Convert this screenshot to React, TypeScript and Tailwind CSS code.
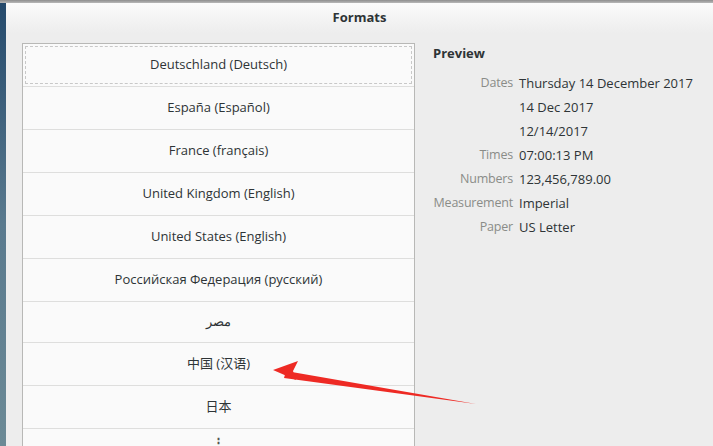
import React from 'react';

const locales = [
  'Deutschland (Deutsch)',
  'España (Español)',
  'France (français)',
  'United Kingdom (English)',
  'United States (English)',
  'Российская Федерация (русский)',
  'مصر',
  '中国 (汉语)',
  '日本',
];

const preview: [string, string][] = [
  ['Dates', 'Thursday 14 December 2017'],
  ['', '14 Dec 2017'],
  ['', '12/14/2017'],
  ['Times', '07:00:13 PM'],
  ['Numbers', '123,456,789.00'],
  ['Measurement', 'Imperial'],
  ['Paper', 'US Letter'],
];

const font = { fontFamily: '"Open Sans", "Noto Sans CJK SC", "Noto Sans", sans-serif' };

const App: React.FC = () => {
  return (
    <div
      className="relative w-[713px] h-[446px] overflow-hidden flex flex-col bg-[#ededed] text-[#2e3436]"
      style={font}
    >
      {/* top edge */}
      <div className="h-[3px] bg-gradient-to-b from-[#8e8e8e] to-[#b8b8b8] shrink-0" />

      <div className="flex flex-1 min-h-0">
        {/* desktop strip */}
        <div className="w-[6px] shrink-0 bg-gradient-to-b from-[#254a6c] via-[#5a7a8e] to-[#6c8a96]" />

        {/* dialog */}
        <div className="flex-1 flex flex-col min-w-0">
          {/* Title bar */}
          <div className="h-[30px] shrink-0 flex items-center justify-center bg-gradient-to-b from-[#fbfbfb] to-[#ededed]">
            <span className="text-[13px] font-bold text-[#2e3436]">Formats</span>
          </div>

          <div className="flex flex-1 min-h-0 pt-[10px] pl-[16px]">
            {/* Locale list */}
            <div className="w-[393px] shrink-0 border border-[#b8b8b6] border-b-0 bg-[#fafafa] flex flex-col overflow-hidden">
              {locales.map((name, i) => (
                <div
                  key={name}
                  className={
                    i === 0
                      ? 'h-[43px] shrink-0 flex items-center justify-center border-b border-[#dededd] p-[2px]'
                      : i === 6
                        ? 'h-[41px] shrink-0 flex items-center justify-center border-b border-[#dededd]'
                        : 'h-[43px] shrink-0 flex items-center justify-center border-b border-[#dededd]'
                  }
                >
                  {i === 0 ? (
                    <div className="w-full h-full flex items-center justify-center border border-dashed border-[#c8c8c8] text-[13px]">
                      {name}
                    </div>
                  ) : (
                    <span className="text-[13px]">{name}</span>
                  )}
                </div>
              ))}
              {/* partially visible next row */}
              <div className="h-[43px] shrink-0 flex justify-center pt-[6px]">
                <span className="text-[13px] leading-[14px] font-bold text-[#555]">⋮</span>
              </div>
            </div>

            {/* Preview */}
            <div className="flex-1 pl-[18px] pt-[1px]">
              <div className="text-[13px] font-bold leading-[18px]">Preview</div>
              <div className="mt-[9px] grid grid-cols-[80px_auto] gap-x-[6px]">
                {preview.map(([label, value], i) => (
                  <React.Fragment key={i}>
                    <div className="text-right text-[12.5px] tracking-[-0.2px] leading-[24px] text-[#8a8c88] whitespace-nowrap">{label}</div>
                    <div className="text-[13px] leading-[24px] whitespace-nowrap">{value}</div>
                  </React.Fragment>
                ))}
              </div>
            </div>
          </div>
        </div>
      </div>

      {/* annotation arrow */}
      <svg className="absolute left-0 top-0 pointer-events-none" width="713" height="446">
        <polygon points="476,404 286,371 284,378" fill="#ee2a24" />
        <polygon points="273,370 298,361 293,371 296,380" fill="#ee2a24" />
      </svg>
    </div>
  );
};

export default App;
